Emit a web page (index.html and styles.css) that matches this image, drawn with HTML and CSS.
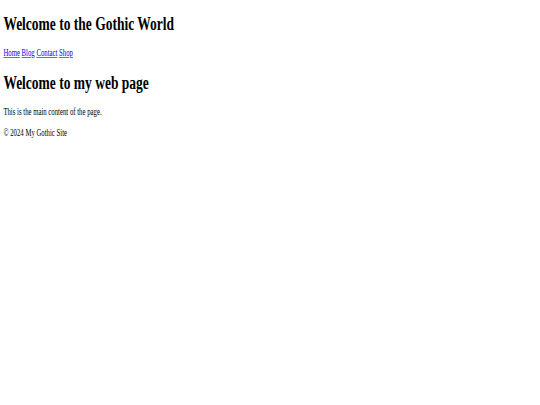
FILE: index.html
```
<!DOCTYPE html>
<html>
<head>
<meta charset="utf-8">
<link rel="stylesheet" href="styles.css">
</head>
<body>
<div class="viewport">
<div class="page">
  <header>
    <h1>Welcome to the Gothic World</h1>
    <nav>
      <a href="#">Home</a>
      <a href="#">Blog</a>
      <a href="#">Contact</a>
      <a href="#">Shop</a>
    </nav>
  </header>
  <main>
    <h1>Welcome to my web page</h1>
    <p>This is the main content of the page.</p>
  </main>
  <footer>
    <p>&copy; 2024 My Gothic Site</p>
  </footer>
</div>
</div>
</body>
</html>
```
FILE: styles.css
```
html, body {
  margin: 0;
  padding: 0;
  background: #ffffff;
  overflow: hidden;
}
.viewport {
  width: 540px;
  height: 405px;
  overflow: hidden;
}
.page {
  display: flow-root;
  width: 1264px;
  padding: 0 8px 8px;
  font-family: "Liberation Serif", "Times New Roman", serif;
  font-size: 16px;
  color: #000;
  transform: scale(0.4219, 0.6);
  transform-origin: 0 0;
}
.page h1 {
  font-size: 32px;
  margin: 21.44px 0;
}
.page p {
  margin: 16px 0;
}
.page a {
  color: #0000ee;
}
```
